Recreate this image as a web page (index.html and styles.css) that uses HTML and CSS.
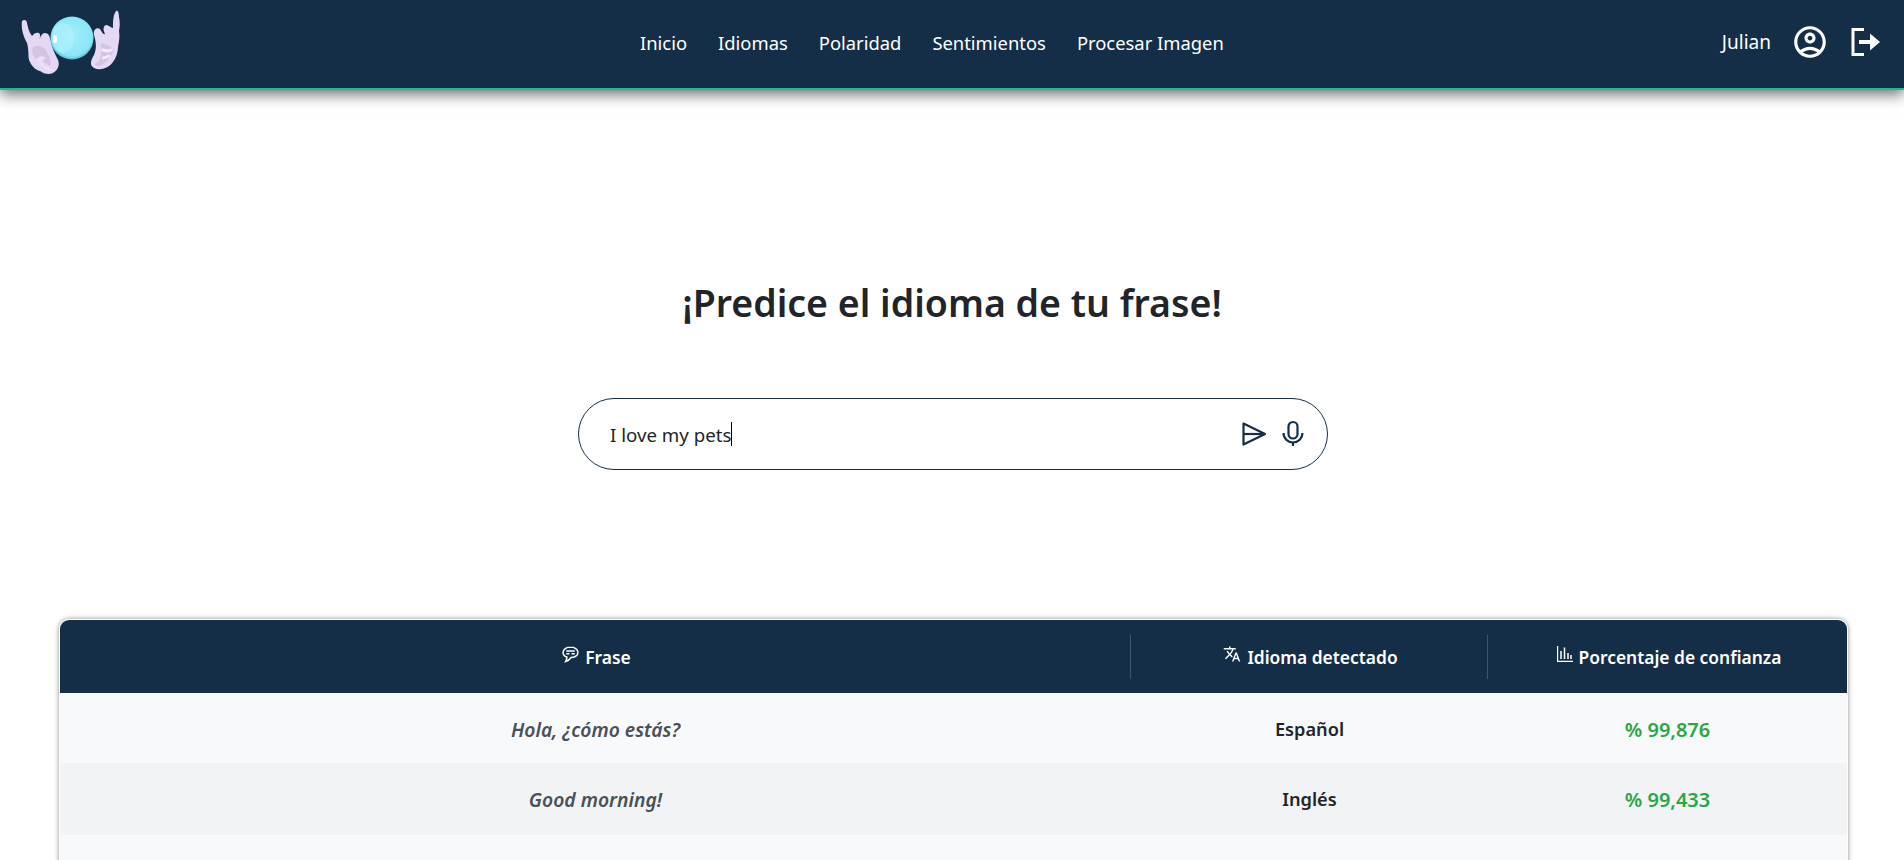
FILE: index.html
```html
<!DOCTYPE html>
<html>

<head>
    <meta name="viewport" content="width=device-width">
    <meta charset="utf-8">

    <title>Idiomas</title>
    <link rel="stylesheet" href="styles.css">
</head>

<body>
    <header class="topbar">
        <a class="logo" href="#">
            <svg width="130" height="88" viewBox="0 0 130 88">
                <defs>
                    <radialGradient id="ball" cx="0.5" cy="0.45" r="0.55">
                        <stop offset="0" stop-color="#a3eefa"/>
                        <stop offset="0.85" stop-color="#8ae6f7"/>
                        <stop offset="1" stop-color="#4fbfd3"/>
                    </radialGradient>
                </defs>
                <path fill="#e4d8f4" d="M22 21C24 19 27 20 27 23C28 28 29 32 32 36C34 33 37 32 39 33C41 35 40 38 39 40C41 36 42 33 45 33C49 33 50 37 51 42C52 48 55 54 58 60C60 65 58 70 53 73C49 75 44 74 40 71C35 70 31 65 29 60C28 55 29 50 27 43C23 36 21 28 22 21Z"/>
                <path fill="#d3c3e4" d="M33 47C39 44 45 47 47 52C50 58 52 62 50 66C46 62 42 62 37 60C33 56 31 51 33 47Z"/>
                <path fill="#ecdffa" d="M36 59C40 55 44 56 46 58C42 60 41 63 45 66C49 68 54 68 54 71C48 72 40 68 36 59Z"/>
                <path fill="#e4d8f4" d="M116 11C118 10 119 13 119 17C120 22 120 26 119 31C120 36 119 42 118 47C118 52 116 58 113 62C109 68 100 71 94 68C89 65 91 60 94 55C97 48 96 42 94 35C93 29 97 27 100 29C102 32 103 35 105 34C103 30 103 26 106 25C109 25 111 28 113 28C113 22 113 15 116 11Z"/>
                <path fill="#d3c3e4" d="M101 43C106 44 112 46 113 51C111 57 107 62 102 65C98 67 95 66 95 64C101 62 102 54 101 43Z"/>
                <path fill="none" stroke="#f3eafc" stroke-width="3" stroke-linecap="round" d="M103 50C106 51 109 51 111 50M103 58C105 58 107 57 109 56"/>
                <circle cx="72" cy="38" r="21.5" fill="url(#ball)"/>
                <ellipse cx="63" cy="38" rx="11" ry="15" fill="#b4f1fb" opacity="0.6"/>
                <ellipse cx="55" cy="39" rx="2" ry="4" fill="#ffffff"/>
            </svg>
        </a>
        <nav class="menu">
            <a href="#">Inicio</a>
            <a href="#">Idiomas</a>
            <a href="#">Polaridad</a>
            <a href="#">Sentimientos</a>
            <a href="#">Procesar Imagen</a>
        </nav>
        <div class="user">
            <span class="user-name">Julian</span>
            <svg class="user-icon" width="38" height="38" viewBox="0 0 24 24" fill="#fff">
                <path d="M12 2C6.48 2 2 6.48 2 12s4.48 10 10 10 10-4.48 10-10S17.52 2 12 2zM7.35 18.5C8.66 17.56 10.26 17 12 17s3.34.56 4.65 1.5c-1.31.94-2.91 1.5-4.65 1.5s-3.34-.56-4.65-1.5zm10.79-1.38C16.45 15.8 14.32 15 12 15s-4.45.8-6.14 2.12C4.7 15.73 4 13.95 4 12c0-4.42 3.58-8 8-8s8 3.58 8 8c0 1.95-.7 3.73-1.86 5.12z"/>
                <path d="M12 6c-1.93 0-3.5 1.57-3.5 3.5S10.07 13 12 13s3.5-1.57 3.5-3.5S13.93 6 12 6zm0 5c-.83 0-1.5-.67-1.5-1.5S11.17 8 12 8s1.5.67 1.5 1.5S12.83 11 12 11z"/>
            </svg>
            <svg class="exit-icon" width="30" height="28" viewBox="0 0 30 28">
                <path d="M13 1.5H2V26.5H13" fill="none" stroke="#fff" stroke-width="3"/>
                <path d="M8 12H19V5.5L29 14L19 22.5V16H8Z" fill="#fff"/>
            </svg>
        </div>
    </header>

    <main>
        <h1 class="title">¡Predice el idioma de tu frase!</h1>

        <div class="search">
            <div class="search-text">I love my pets<span class="caret"></span></div>
            <svg class="send-icon" width="26" height="26" viewBox="0 0 26 26" fill="none" stroke="#152e47" stroke-width="2.2" stroke-linejoin="round">
                <path d="M2.5 2.5L24 13L2.5 23.5Z"/>
                <path d="M2.5 13H24"/>
            </svg>
            <svg class="mic-icon" width="28" height="28" viewBox="0 0 28 28" fill="none" stroke="#152e47" stroke-width="2.2">
                <rect x="9.5" y="2" width="9" height="16.5" rx="4.5"/>
                <path d="M4.5 13a9.5 9.5 0 0 0 19 0"/>
                <path d="M14 22v4"/>
            </svg>
        </div>

        <section class="results">
            <div class="row head">
                <div class="cell">
                    <svg class="head-icon" width="17" height="17" viewBox="0 0 16 16" fill="none" stroke="#fff" stroke-width="1.4">
                        <path d="M8 1C4.2 1 1 3 1 6C1 8.2 2.8 9.8 4.6 10.4C4.6 12 4 13.5 3.4 14.6C5.4 14 7.4 12.6 8.4 10.9C12 10.8 15 8.8 15 6C15 3 11.8 1 8 1Z"/>
                        <path d="M4 4.6H12M4 7.2H7M9 7.2H12"/>
                    </svg>
                    Frase
                </div>
                <div class="cell">
                    <svg class="head-icon" width="18" height="18" viewBox="0 0 24 24" fill="#fff">
                        <path d="M12.87 15.07l-2.54-2.51.03-.03c1.74-1.94 2.98-4.17 3.71-6.53H17V4h-7V2H8v2H1v1.99h11.17C11.5 7.92 10.44 9.75 9 11.35 8.07 10.32 7.3 9.19 6.69 8h-2c.73 1.63 1.73 3.17 2.98 4.56l-5.09 5.02L4 19l5-5 3.11 3.11.76-2.04zM18.5 10h-2L12 22h2l1.12-3h4.75L21 22h2l-4.5-12zm-2.62 7l1.62-4.33L19.12 17h-3.24z"/>
                    </svg>
                    Idioma detectado
                </div>
                <div class="cell">
                    <svg class="head-icon" width="16" height="16" viewBox="0 0 16 16" fill="none" stroke="#fff" stroke-width="1.2">
                        <path d="M.6 0V15.4H16"/>
                        <path d="M4 13V5M7.5 13V1.5M11 13V7M14 13V9" stroke-width="1.5"/>
                    </svg>
                    Porcentaje de confianza
                </div>
            </div>
            <div class="row">
                <div class="cell phrase">Hola, ¿cómo estás?</div>
                <div class="cell lang">Español</div>
                <div class="cell score">% 99,876</div>
            </div>
            <div class="row even">
                <div class="cell phrase">Good morning!</div>
                <div class="cell lang">Inglés</div>
                <div class="cell score">% 99,433</div>
            </div>
            <div class="row"></div>
        </section>
    </main>
</body>

</html>
```

FILE: styles.css
```css
html,
body {
    height: 100%;
    overflow: hidden;
}

body {
    font-family: "Noto Sans", "Open Sans", sans-serif;
    margin: 0;
    padding: 0;
    background-color: #fff;
    color: #212529;
}

a {
    color: inherit;
    text-decoration: none;
}

.topbar {
    display: flex;
    justify-content: space-between;
    align-items: center;
    height: 88px;
    padding-right: 23px;
    background-color: #152e47;
    border-bottom: 2px solid #10c096;
    box-shadow: 0 4px 14px rgba(0, 0, 0, 0.6);
    color: #fff;
}

.logo {
    display: block;
    width: 142px;
    height: 88px;
}

.menu {
    display: flex;
    gap: 31px;
    padding-bottom: 3px;
    font-size: 18.4px;
}

.user {
    display: flex;
    align-items: center;
    padding-bottom: 4px;
    font-size: 19px;
}

.user-icon {
    margin-left: 20px;
}

.exit-icon {
    margin-left: 22px;
}

.title {
    margin: 0;
    padding-top: 188px;
    font-size: 37.5px;
    line-height: 50px;
    font-weight: 600;
    text-align: center;
}

.search {
    display: flex;
    align-items: center;
    box-sizing: border-box;
    width: 750px;
    height: 72px;
    margin: 70px 0 0 578px;
    padding: 0 20px 0 31px;
    border: 1px solid #152e47;
    border-radius: 36px;
    color: #212529;
}

.search-text {
    display: flex;
    align-items: center;
    flex: 1;
    font-size: 18.7px;
}

.caret {
    width: 1px;
    height: 24px;
    background-color: #000;
}

.send-icon {
    margin-right: 12px;
}

.results {
    box-sizing: border-box;
    width: 1789px;
    margin: 149px 0 0 59px;
    border: 1px solid #fff;
    border-radius: 10px;
    box-shadow: 0 0 5px rgba(0, 0, 0, 0.45);
    overflow: hidden;
}

.row {
    display: grid;
    grid-template-columns: 1071px 357px 1fr;
    height: 70px;
    background-color: #f8f9fa;
}

.row.even {
    height: 72px;
    background-color: #f1f3f5;
}

.row.even .cell {
    padding-top: 0;
}

.cell {
    display: flex;
    justify-content: center;
    align-items: center;
    padding-top: 2px;
    font-size: 18.2px;
    font-weight: 600;
}

.head {
    height: 73px;
    background-color: #152e47;
    color: #fff;
    align-items: center;
}

.head .cell {
    gap: 6px;
    box-sizing: border-box;
    height: 44px;
    padding-top: 0;
    padding-left: 3px;
    font-size: 17.4px;
    border-right: 1px solid #40566c;
}

.head .cell:last-child {
    border-right: none;
}

.head-icon {
    margin-top: -5px;
}

.phrase {
    font-size: 19.3px;
    font-style: italic;
    color: #495057;
}

.lang {
    color: #212529;
}

.score {
    font-size: 20px;
    color: #28a745;
}
```
